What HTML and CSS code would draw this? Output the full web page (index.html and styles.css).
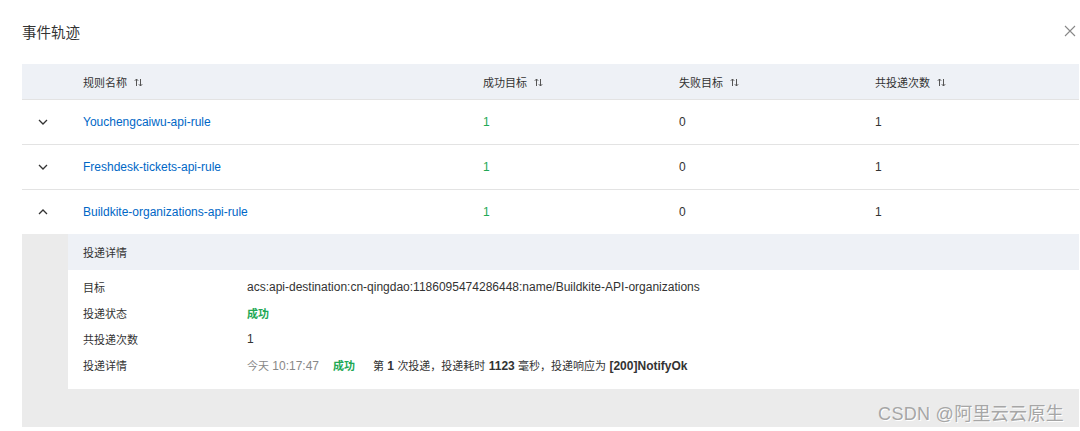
FILE: index.html
```html
<!DOCTYPE html>
<html>
<head>
<meta charset="utf-8">
<link rel="stylesheet" href="styles.css">
</head>
<body>
<div class="dialog">
  <div class="title-bar">
    <div class="title">事件轨迹</div>
    <svg class="close" width="12" height="12" viewBox="0 0 12 12"><path d="M1 1 L11 11 M11 1 L1 11" stroke="#888" stroke-width="1.1" fill="none"/></svg>
  </div>
  <div class="table">
    <div class="row head">
      <div></div>
      <div class="th"><span class="cjk">规则名称</span> <svg class="sort" width="9" height="9" viewBox="0 0 9 9"><path d="M2.5 8 V1 M0.8 2.8 L2.5 1 L4.2 2.8 M6.5 1 V8 M4.8 6.2 L6.5 8 L8.2 6.2" stroke="#555" stroke-width="1" fill="none"/></svg></div>
      <div class="th"><span class="cjk">成功目标</span> <svg class="sort" width="9" height="9" viewBox="0 0 9 9"><path d="M2.5 8 V1 M0.8 2.8 L2.5 1 L4.2 2.8 M6.5 1 V8 M4.8 6.2 L6.5 8 L8.2 6.2" stroke="#555" stroke-width="1" fill="none"/></svg></div>
      <div class="th"><span class="cjk">失败目标</span> <svg class="sort" width="9" height="9" viewBox="0 0 9 9"><path d="M2.5 8 V1 M0.8 2.8 L2.5 1 L4.2 2.8 M6.5 1 V8 M4.8 6.2 L6.5 8 L8.2 6.2" stroke="#555" stroke-width="1" fill="none"/></svg></div>
      <div class="th"><span class="cjk">共投递次数</span> <svg class="sort" width="9" height="9" viewBox="0 0 9 9"><path d="M2.5 8 V1 M0.8 2.8 L2.5 1 L4.2 2.8 M6.5 1 V8 M4.8 6.2 L6.5 8 L8.2 6.2" stroke="#555" stroke-width="1" fill="none"/></svg></div>
    </div>
    <div class="row">
      <div class="toggle"><svg width="10" height="6" viewBox="0 0 10 6"><path d="M1 1 L5 5 L9 1" stroke="#333" stroke-width="1.3" fill="none"/></svg></div>
      <div class="link">Youchengcaiwu-api-rule</div>
      <div class="ok">1</div>
      <div>0</div>
      <div>1</div>
    </div>
    <div class="row">
      <div class="toggle"><svg width="10" height="6" viewBox="0 0 10 6"><path d="M1 1 L5 5 L9 1" stroke="#333" stroke-width="1.3" fill="none"/></svg></div>
      <div class="link">Freshdesk-tickets-api-rule</div>
      <div class="ok">1</div>
      <div>0</div>
      <div>1</div>
    </div>
    <div class="row">
      <div class="toggle"><svg width="10" height="6" viewBox="0 0 10 6"><path d="M1 5 L5 1 L9 5" stroke="#333" stroke-width="1.3" fill="none"/></svg></div>
      <div class="link">Buildkite-organizations-api-rule</div>
      <div class="ok">1</div>
      <div>0</div>
      <div>1</div>
    </div>
    <div class="expand">
      <div class="card">
        <div class="card-head"><span class="cjk">投递详情</span></div>
        <div class="card-body">
          <div class="kv"><div class="k cjk">目标</div><div class="v">acs:api-destination:cn-qingdao:1186095474286448:name/Buildkite-API-organizations</div></div>
          <div class="kv"><div class="k cjk">投递状态</div><div class="v ok bold cjk">成功</div></div>
          <div class="kv"><div class="k cjk">共投递次数</div><div class="v">1</div></div>
          <div class="kv"><div class="k cjk">投递详情</div><div class="v log"><span class="time"><span class="cjk">今天</span> 10:17:47</span><span class="ok bold cjk st">成功</span><span class="msg"><span class="cjk">第</span> <b>1</b> <span class="cjk">次投递，投递耗时</span> <b>1123</b> <span class="cjk">毫秒，投递响应为</span> <b>[200]NotifyOk</b></span></div></div>
        </div>
      </div>
    </div>
  </div>
</div>
<div class="watermark">CSDN @阿里云云原生</div>
</body>
</html>
```

FILE: styles.css
```css
html, body {
  margin: 0;
  padding: 0;
  background: #fff;
}
body {
  font-family: "Liberation Sans", "Noto Sans CJK SC", sans-serif;
  font-size: 12px;
  color: #333;
  width: 1080px;
  height: 431px;
  overflow: hidden;
  position: relative;
}
.cjk {
  font-size: 11px;
}
.dialog {
  padding: 0 1px 0 22px;
}
.title-bar {
  height: 64px;
  display: flex;
  align-items: center;
  justify-content: space-between;
  padding-right: 3px;
}
.title {
  font-size: 14.5px;
  color: #333;
  margin-top: -2px;
}
.close {
  margin-top: -3px;
}
.row {
  display: grid;
  grid-template-columns: 61px 400px 196px 196px 1fr;
  align-items: center;
  height: 44px;
  border-bottom: 1px solid #e3e3e3;
}
.row.head {
  height: 35px;
  background: #eef1f6;
  border-bottom: 1px solid #e3e3e3;
  color: #333;
}
.th {
  display: flex;
  align-items: center;
  gap: 7px;
}
.sort {
  margin-top: 1px;
}
.toggle {
  display: flex;
  justify-content: flex-start;
  padding-left: 16px;
  align-items: center;
}
.link {
  color: #0067c6;
}
.ok {
  color: #22a854;
}
.bold {
  font-weight: bold;
}
.expand {
  background: #ebebeb;
  padding: 0 0 38px 46px;
  margin-top: -1px;
}
.card {
  background: #fff;
}
.card-head {
  height: 36px;
  background: #eef1f6;
  display: flex;
  align-items: center;
  padding-left: 15px;
}
.card-body {
  padding: 4px 0 11px 15px;
}
.kv {
  display: grid;
  grid-template-columns: 164px 1fr;
  height: 26px;
  align-items: center;
}
.log {
  display: flex;
  align-items: center;
}
.time {
  color: #888;
  width: 86px;
}
.log .st {
  width: 40px;
}
.msg b {
  font-weight: bold;
}
.msg {
  color: #333;
}
.watermark {
  position: absolute;
  right: 16px;
  top: 399px;
  font-size: 18px;
  color: #a6a6a6;
  text-shadow: 1px 1px 0 #fff;
  letter-spacing: 0.3px;
}
```
